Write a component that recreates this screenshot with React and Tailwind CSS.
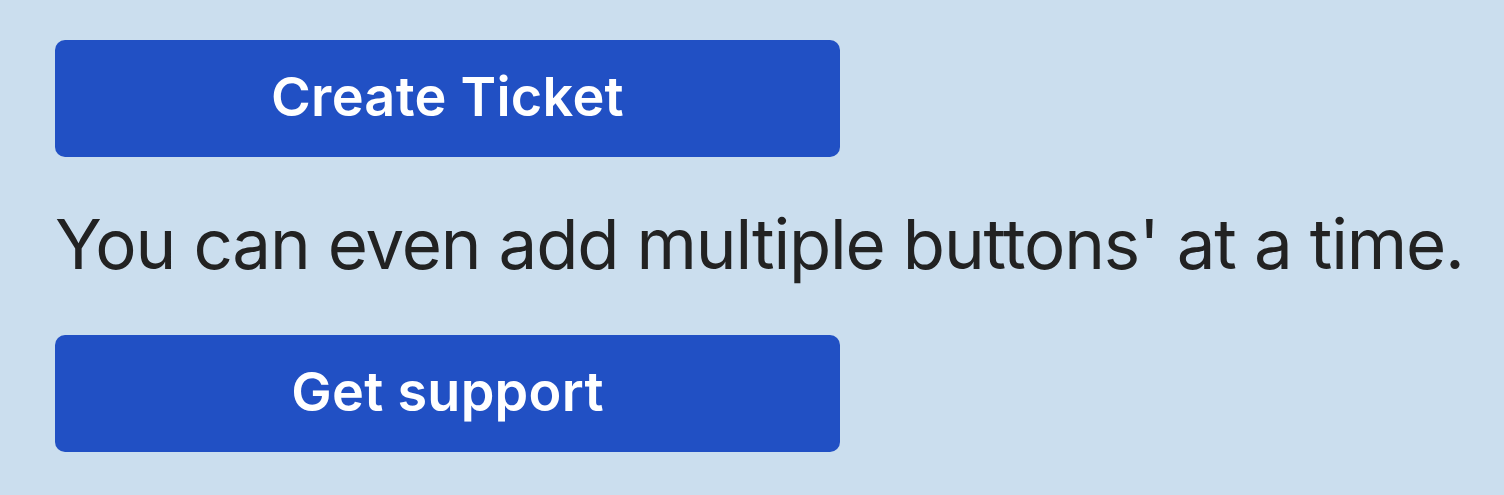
import React from "react";

export default function App() {
  const btn =
    "w-[785px] h-[117px] rounded-[10px] bg-[#2150c4] text-white font-semibold text-[54px] tracking-[0.005em] leading-none flex items-center justify-center pb-[4px]";

  return (
    <div
      className="w-[1504px] h-[495px] bg-[#cbdeee] pl-[55px] pt-[40px] flex flex-col"
      style={{ fontFamily: "Inter, 'Noto Sans', sans-serif" }}
    >
      <button className={btn}>Create Ticket</button>
      <p className="text-[#222222] text-[69px] tracking-[-0.017em] leading-none mt-[53px] mb-[56px] whitespace-nowrap">
        You can even add multiple buttons' at a time.
      </p>
      <button className={btn}>Get support</button>
    </div>
  );
}
